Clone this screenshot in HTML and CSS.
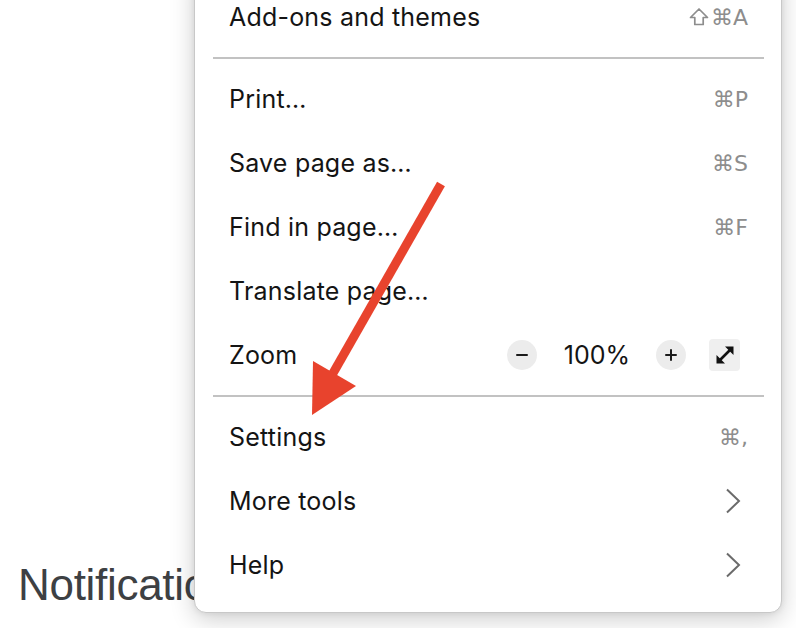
FILE: index.html
```html
<!DOCTYPE html>
<html>
<head>
<meta charset="utf-8">
<link rel="stylesheet" href="styles.css">
</head>
<body>
<main class="page">
  <h1 class="heading">Notifications</h1>
</main>

<div class="menu">
  <div class="row"><span class="label">Add-ons and themes</span><span class="key"><svg class="shift" width="20" height="20" viewBox="0 0 20 20"><path d="M10 2L18.5 10.5H14.2V17.5H5.8V10.5H1.5Z" fill="none" stroke="#8d8d8d" stroke-width="1.7" stroke-linejoin="round"/></svg>⌘A</span></div>
  <div class="sep"></div>
  <div class="row"><span class="label">Print…</span><span class="key">⌘P</span></div>
  <div class="row"><span class="label">Save page as…</span><span class="key">⌘S</span></div>
  <div class="row"><span class="label">Find in page…</span><span class="key">⌘F</span></div>
  <div class="row"><span class="label">Translate page…</span></div>
  <div class="row">
    <span class="label">Zoom</span>
    <div class="zoom">
      <span class="round">
        <svg width="14" height="14" viewBox="0 0 14 14"><path d="M2 7h10" stroke="#1a1a1a" stroke-width="2" stroke-linecap="round"/></svg>
      </span>
      <span class="pct">100%</span>
      <span class="round">
        <svg width="14" height="14" viewBox="0 0 14 14"><path d="M2 7h10M7 2v10" stroke="#1a1a1a" stroke-width="2" stroke-linecap="round"/></svg>
      </span>
      <span class="full">
        <svg width="24" height="24" viewBox="0 0 24 24">
          <path d="M6.5 17.5L17.5 6.5" stroke="#111" stroke-width="2.6"/>
          <path d="M12 3.5h8.5V12z" fill="#111"/>
          <path d="M12 20.5H3.5V12z" fill="#111"/>
        </svg>
      </span>
    </div>
  </div>
  <div class="sep"></div>
  <div class="row"><span class="label">Settings</span><span class="key">⌘,</span></div>
  <div class="row"><span class="label">More tools</span>
    <svg class="chev" width="16" height="26" viewBox="0 0 16 26"><path d="M2 1.5l12 11.5-12 11.5" fill="none" stroke="#6b6b6b" stroke-width="2"/></svg>
  </div>
  <div class="row"><span class="label">Help</span>
    <svg class="chev" width="16" height="26" viewBox="0 0 16 26"><path d="M2 1.5l12 11.5-12 11.5" fill="none" stroke="#6b6b6b" stroke-width="2"/></svg>
  </div>
</div>

<svg class="arrow" width="796" height="628" viewBox="0 0 796 628">
  <path d="M441 184L332 375" stroke="#e8432d" stroke-width="9" stroke-linecap="butt"/>
  <path d="M312 415L313 361L356 386z" fill="#e8432d"/>
</svg>
</body>
</html>
```

FILE: styles.css
```css
html, body {
  margin: 0;
  padding: 0;
  width: 796px;
  height: 628px;
  overflow: hidden;
  background: #ffffff;
  font-family: "Liberation Sans", Arial, sans-serif;
}

.page {
  position: relative;
  height: 628px;
  padding: 0 0 0 18px;
  box-sizing: border-box;
  display: flex;
  align-items: flex-end;
}

.heading {
  margin: 0 0 18px 0;
  font-size: 44px;
  font-weight: 400;
  color: #3d4043;
  letter-spacing: -0.3px;
}

.menu {
  position: absolute;
  left: 194px;
  top: -31px;
  width: 588px;
  box-sizing: border-box;
  padding: 15px 0 15px 0;
  background: #ffffff;
  border: 1px solid #c8c8c8;
  border-radius: 12px;
  box-shadow: 0 6px 24px rgba(0, 0, 0, 0.2), 0 0 6px rgba(0, 0, 0, 0.08);
  font-family: "Inter", "Liberation Sans", sans-serif;
}

.row {
  height: 64px;
  display: flex;
  align-items: center;
  justify-content: space-between;
  padding: 0 33px 0 34px;
}

.label {
  font-size: 25px;
  letter-spacing: 0.2px;
  color: #141414;
}

.key {
  font-size: 22px;
  color: #8d8d8d;
  font-family: "DejaVu Sans", "Liberation Sans", sans-serif;
  display: flex;
  align-items: center;
}

.shift {
  margin-right: 2px;
}

.chev {
  margin-right: 7px;
}

.sep {
  height: 18px;
  display: flex;
  align-items: center;
  margin: 0 17px 0 18px;
}

.sep::before {
  content: "";
  flex: 1;
  height: 2px;
  background: #c2c2c2;
}

.zoom {
  display: flex;
  align-items: center;
  margin-right: 8px;
}

.round {
  width: 30px;
  height: 30px;
  border-radius: 50%;
  background: #ececec;
  display: flex;
  align-items: center;
  justify-content: center;
}

.pct {
  font-size: 25px;
  color: #141414;
  margin: 0 26px 0 27px;
}

.full {
  width: 31px;
  height: 32px;
  margin-left: 23px;
  border-radius: 4px;
  background: #efefef;
  display: flex;
  align-items: center;
  justify-content: center;
}

.arrow {
  position: absolute;
  left: 0;
  top: 0;
  pointer-events: none;
}
```
